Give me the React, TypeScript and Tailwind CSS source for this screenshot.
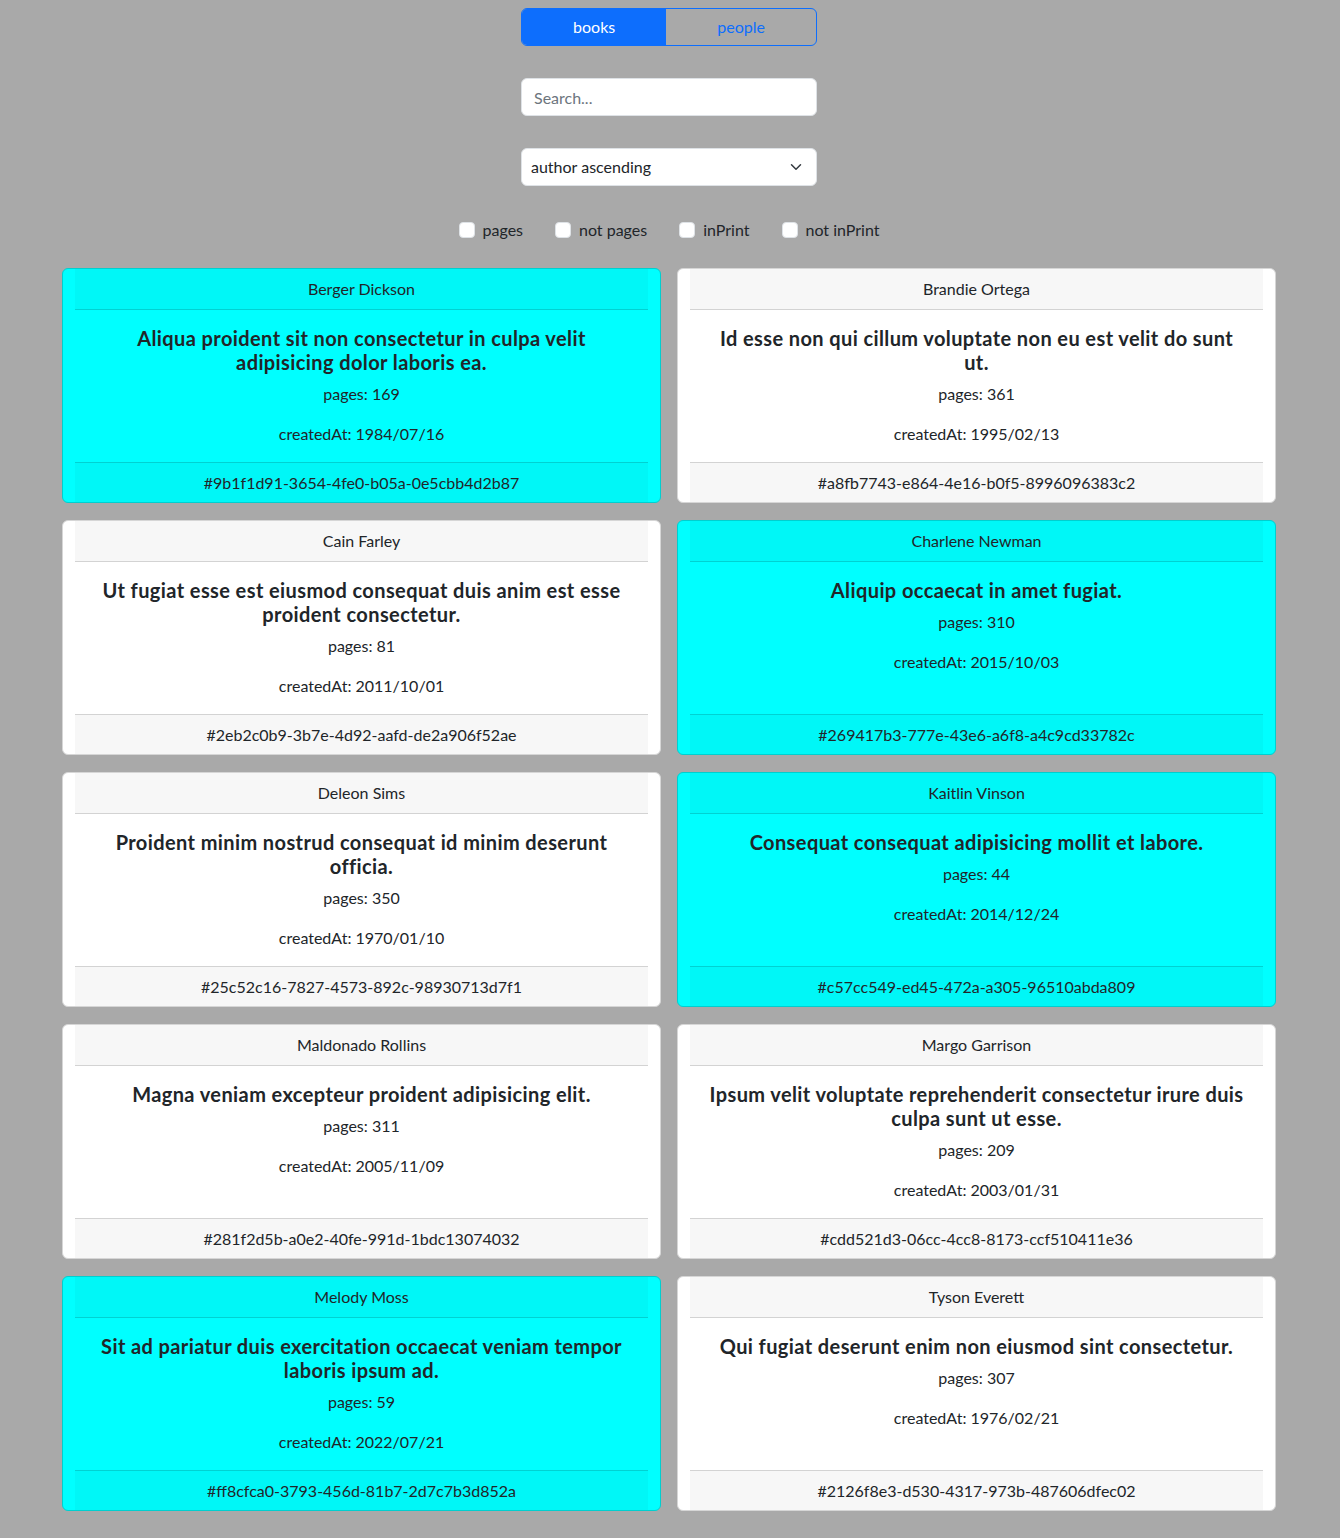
import { useState } from "react";

type Book = {
  id: string;
  author: string;
  title: string[];
  pages: number;
  createdAt: string;
  inPrint: boolean;
};

// title lines are split the way the original layout wraps them
const books: Book[] = [
  { id: "9b1f1d91-3654-4fe0-b05a-0e5cbb4d2b87", author: "Berger Dickson", title: ["Aliqua proident sit non consectetur in culpa velit", "adipisicing dolor laboris ea."], pages: 169, createdAt: "1984/07/16", inPrint: true },
  { id: "a8fb7743-e864-4e16-b0f5-8996096383c2", author: "Brandie Ortega", title: ["Id esse non qui cillum voluptate non eu est velit do sunt", "ut."], pages: 361, createdAt: "1995/02/13", inPrint: false },
  { id: "2eb2c0b9-3b7e-4d92-aafd-de2a906f52ae", author: "Cain Farley", title: ["Ut fugiat esse est eiusmod consequat duis anim est esse", "proident consectetur."], pages: 81, createdAt: "2011/10/01", inPrint: false },
  { id: "269417b3-777e-43e6-a6f8-a4c9cd33782c", author: "Charlene Newman", title: ["Aliquip occaecat in amet fugiat."], pages: 310, createdAt: "2015/10/03", inPrint: true },
  { id: "25c52c16-7827-4573-892c-98930713d7f1", author: "Deleon Sims", title: ["Proident minim nostrud consequat id minim deserunt", "officia."], pages: 350, createdAt: "1970/01/10", inPrint: false },
  { id: "c57cc549-ed45-472a-a305-96510abda809", author: "Kaitlin Vinson", title: ["Consequat consequat adipisicing mollit et labore."], pages: 44, createdAt: "2014/12/24", inPrint: true },
  { id: "281f2d5b-a0e2-40fe-991d-1bdc13074032", author: "Maldonado Rollins", title: ["Magna veniam excepteur proident adipisicing elit."], pages: 311, createdAt: "2005/11/09", inPrint: false },
  { id: "cdd521d3-06cc-4cc8-8173-ccf510411e36", author: "Margo Garrison", title: ["Ipsum velit voluptate reprehenderit consectetur irure duis", "culpa sunt ut esse."], pages: 209, createdAt: "2003/01/31", inPrint: false },
  { id: "ff8cfca0-3793-456d-81b7-2d7c7b3d852a", author: "Melody Moss", title: ["Sit ad pariatur duis exercitation occaecat veniam tempor", "laboris ipsum ad."], pages: 59, createdAt: "2022/07/21", inPrint: true },
  { id: "2126f8e3-d530-4317-973b-487606dfec02", author: "Tyson Everett", title: ["Qui fugiat deserunt enim non eiusmod sint consectetur."], pages: 307, createdAt: "1976/02/21", inPrint: false },
];

const filters = ["pages", "not pages", "inPrint", "not inPrint"];

function BookCard({ book }: { book: Book }) {
  const cyan = book.inPrint;
  const band = cyan ? "bg-[#00f7f7] border-[#00d2d2]" : "bg-[#f7f7f7] border-[#d3d3d3]";
  return (
    <div
      className={
        "flex flex-col rounded-md border px-3 " +
        (cyan ? "bg-[#00ffff] border-[#00cfcf]" : "bg-white border-[#d6d6d6]")
      }
    >
      {/* header */}
      <div className={"h-[41px] border-b text-center leading-[40px] " + band}>{book.author}</div>

      {/* body */}
      <div className="flex-1 px-4 pt-4 text-center">
        <h5 className="mb-2 text-[20px] font-bold leading-6 tracking-[0.4px]">
          {book.title.map((line) => (
            <span key={line} className="block whitespace-nowrap">
              {line}
            </span>
          ))}
        </h5>
        <p className="mb-4 leading-6">pages: {book.pages}</p>
        <p className="mb-4 leading-6">createdAt: {book.createdAt}</p>
      </div>

      {/* footer */}
      <div className={"h-[40px] border-t text-center leading-[39px] " + band}>#{book.id}</div>
    </div>
  );
}

export default function App() {
  const [tab, setTab] = useState("books");

  return (
    <div
      className="min-h-[1538px] bg-[#a9a9a9] pt-2 pb-[27px] text-[16px] text-[#212529]"
      style={{ fontFamily: "Lato, 'Noto Sans', sans-serif" }}
    >
      <div className="pr-[2px]">
        {/* Tabs */}
        <div className="mx-auto flex h-[38px] w-[296px] overflow-hidden rounded-md border border-[#0d6efd]">
          <button
            onClick={() => setTab("books")}
            className={"flex-auto " + (tab === "books" ? "bg-[#0d6efd] text-white" : "text-[#0d6efd]")}
          >
            books
          </button>
          <button
            onClick={() => setTab("people")}
            className={"flex-auto " + (tab === "people" ? "bg-[#0d6efd] text-white" : "text-[#0d6efd]")}
          >
            people
          </button>
        </div>

        {/* Search */}
        <div className="mx-auto mt-8 w-[296px]">
          <input
            placeholder="Search..."
            className="h-[38px] w-full rounded-md border border-[#dee2e6] bg-white px-3 outline-none placeholder:text-[#6c757d]"
          />
        </div>

        {/* Sort */}
        <div className="mx-auto mt-8 flex h-[38px] w-[296px] items-center justify-between rounded-md border border-[#dee2e6] bg-white pl-[9px] pr-[14px]">
          <span>author ascending</span>
          <svg width="12" height="12" viewBox="0 0 16 16" fill="none" stroke="#343a40" strokeWidth="2" strokeLinecap="round" strokeLinejoin="round">
            <path d="M2 5l6 6 6-6" />
          </svg>
        </div>

        {/* Filters */}
        <div className="mt-8 flex h-6 items-center justify-center gap-8">
          {filters.map((f) => (
            <label key={f} className="flex items-center gap-2">
              <span className="h-4 w-4 rounded-[4px] border border-[#dee2e6] bg-white" />
              <span>{f}</span>
            </label>
          ))}
        </div>
      </div>

      {/* Cards */}
      <div className="mt-[26px] grid grid-cols-2 gap-x-4 gap-y-[17px] pl-[62px] pr-[64px]">
        {books.map((b) => (
          <BookCard key={b.id} book={b} />
        ))}
      </div>
    </div>
  );
}
